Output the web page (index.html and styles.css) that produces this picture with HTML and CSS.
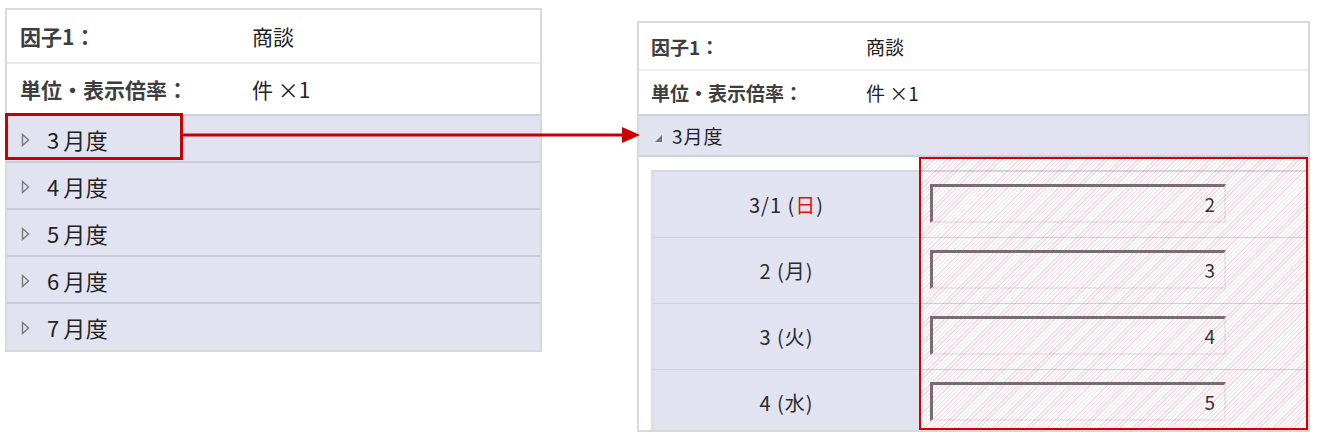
FILE: index.html
```html
<!DOCTYPE html>
<html lang="ja">
<head>
<meta charset="utf-8">
<title>月度展開</title>
<link rel="stylesheet" href="styles.css">
</head>
<body>
<div class="stage">
  <section class="panel panel-left">
    <div class="info-row first">
      <span class="label">因子1：</span>
      <span class="value">商談</span>
    </div>
    <div class="info-row second">
      <span class="label">単位・表示倍率：</span>
      <span class="value">件 ×1</span>
    </div>
    <div class="month-row">
      <svg class="tri-right" width="9" height="14" viewBox="0 0 9 14"><polygon points="1.5,1.5 7.5,7 1.5,12.5" fill="none" stroke="#7a7a7a" stroke-width="1.4"/></svg>
      <span class="month">3 月度</span>
    </div>
    <div class="month-row">
      <svg class="tri-right" width="9" height="14" viewBox="0 0 9 14"><polygon points="1.5,1.5 7.5,7 1.5,12.5" fill="none" stroke="#7a7a7a" stroke-width="1.4"/></svg>
      <span class="month">4 月度</span>
    </div>
    <div class="month-row">
      <svg class="tri-right" width="9" height="14" viewBox="0 0 9 14"><polygon points="1.5,1.5 7.5,7 1.5,12.5" fill="none" stroke="#7a7a7a" stroke-width="1.4"/></svg>
      <span class="month">5 月度</span>
    </div>
    <div class="month-row">
      <svg class="tri-right" width="9" height="14" viewBox="0 0 9 14"><polygon points="1.5,1.5 7.5,7 1.5,12.5" fill="none" stroke="#7a7a7a" stroke-width="1.4"/></svg>
      <span class="month">6 月度</span>
    </div>
    <div class="month-row last">
      <svg class="tri-right" width="9" height="14" viewBox="0 0 9 14"><polygon points="1.5,1.5 7.5,7 1.5,12.5" fill="none" stroke="#7a7a7a" stroke-width="1.4"/></svg>
      <span class="month">7 月度</span>
    </div>
  </section>

  <section class="panel panel-right">
    <div class="info-row first">
      <span class="label">因子1：</span>
      <span class="value">商談</span>
    </div>
    <div class="info-row second">
      <span class="label">単位・表示倍率：</span>
      <span class="value">件 ×1</span>
    </div>
    <div class="month-head">
      <svg class="tri-open" width="9" height="9" viewBox="0 0 9 9"><polygon points="8,1 8,8 1,8" fill="#777"/></svg>
      <span class="month">3月度</span>
    </div>
    <div class="detail">
      <div class="grid">
        <div class="day">3/1 (<span class="sun">日</span>)</div>
        <div class="cell"><div class="field">2</div></div>
        <div class="day">2 (月)</div>
        <div class="cell"><div class="field">3</div></div>
        <div class="day">3 (火)</div>
        <div class="cell"><div class="field">4</div></div>
        <div class="day">4 (水)</div>
        <div class="cell"><div class="field">5</div></div>
      </div>
      <div class="hatch"></div>
    </div>
  </section>

  <div class="callout"></div>
  <svg class="arrow" width="458" height="18" viewBox="0 0 458 18">
    <rect x="0" y="7.5" width="442" height="3" fill="#c80000"/>
    <polygon points="439,1 457,9 439,17" fill="#c80000"/>
  </svg>
</div>
</body>
</html>
```

FILE: styles.css
```css
* { box-sizing: border-box; }

html, body {
  margin: 0;
  padding: 0;
  background: #ffffff;
}

body {
  font-family: "Noto Sans CJK JP", "Noto Sans", sans-serif;
  color: #2b2b2b;
  width: 1317px;
  height: 440px;
  overflow: hidden;
}

.stage {
  position: relative;
  display: flex;
  align-items: flex-start;
  padding-left: 5px;
}

.panel {
  border: 2px solid #d9d9d9;
  background: #ffffff;
  display: flex;
  flex-direction: column;
}
.panel > * { flex-shrink: 0; }

/* ---------- left panel ---------- */
.panel-left {
  width: 537px;
  height: 344px;
  margin-top: 8px;
}

.info-row {
  display: flex;
  align-items: center;
}

.panel-left .info-row { padding-left: 13px; }
.panel-left .info-row.first { height: 54px; border-bottom: 2px solid #ececec; }
.panel-left .info-row.second { height: 52px; border-bottom: 2px solid #cfd0dc; }

.panel-left .label {
  width: 232px;
  font-size: 21px;
  font-weight: 700;
  color: #3e3e3e;
}
.panel-left .value {
  font-size: 21px;
  color: #222;
}

.month-row {
  height: 47px;
  background: #e1e3f1;
  border-bottom: 2px solid #cbccd8;
  display: flex;
  align-items: center;
  padding-left: 14px;
}
.month-row.last {
  height: 46px;
  border-bottom: 0;
}

.tri-right { margin-right: 17px; margin-top: 2px; }

.month-row .month {
  font-size: 22px;
  letter-spacing: 0.5px;
  word-spacing: -2px;
  color: #222;
}

/* ---------- right panel ---------- */
.panel-right {
  width: 673px;
  height: 411px;
  margin-top: 21px;
  margin-left: 95px;
  overflow: hidden;
}

.panel-right .info-row { padding-left: 12px; }
.panel-right .info-row.first { height: 48px; border-bottom: 2px solid #ececec; }
.panel-right .info-row.second { height: 45px; border-bottom: 2px solid #cfd0dc; }

.panel-right .label {
  width: 215px;
  font-size: 19px;
  font-weight: 700;
  color: #3e3e3e;
}
.panel-right .value {
  font-size: 19px;
  color: #222;
}

.month-head {
  height: 41px;
  background: #e1e3f1;
  border-bottom: 2px solid #cfd0dc;
  display: flex;
  align-items: center;
  padding-left: 15px;
}
.tri-open { margin-right: 9px; margin-top: 6px; }
.month-head .month {
  font-size: 19px;
  letter-spacing: 1px;
  color: #222;
}

.detail {
  position: relative;
  flex: 1 1 0;
  min-height: 0;
  overflow: hidden;
  padding: 13px 0 0 12px;
}

.grid {
  display: grid;
  grid-template-columns: 266px 1fr;
  grid-auto-rows: 66px;
  border-top: 2px solid #d7d8e2;
  border-left: 3px solid #dcdde6;
}

.day {
  background: #e1e3f1;
  border-bottom: 1px solid #cfd0dc;
  border-right: 1px solid #cfd0e0;
  display: flex;
  align-items: center;
  justify-content: center;
  font-size: 20px;
  letter-spacing: 1px;
  color: #2b2b2b;
}
.sun { color: #e01010; }

.cell {
  background: #ffffff;
  border-bottom: 1px solid #d4d4dc;
  display: flex;
  align-items: center;
  padding-left: 10px;
}

.field {
  width: 296px;
  height: 39px;
  border-top: 3px solid #6f6f6f;
  border-left: 3px solid #6f6f6f;
  border-right: 2px solid #ececec;
  border-bottom: 2px solid #ececec;
  background: #ffffff;
  display: flex;
  align-items: center;
  justify-content: flex-end;
  padding-right: 9px;
  font-size: 19px;
  color: #2b2b2b;
  margin-top: -3px;
}

.hatch {
  position: absolute;
  left: 280px;
  top: 0;
  right: 0;
  bottom: 0;
  background-image: repeating-linear-gradient(135deg, rgba(214, 90, 130, 0.24) 0 1px, rgba(255, 255, 255, 0) 1px 3px);
  pointer-events: none;
}
.hatch::after {
  content: "";
  position: absolute;
  inset: 0;
  border: 2px solid #d40000;
}

/* ---------- annotations ---------- */
.callout {
  position: absolute;
  left: 5px;
  top: 113px;
  width: 178px;
  height: 47px;
  border: 3px solid #c80000;
}

.arrow {
  position: absolute;
  left: 183px;
  top: 126px;
}
```
